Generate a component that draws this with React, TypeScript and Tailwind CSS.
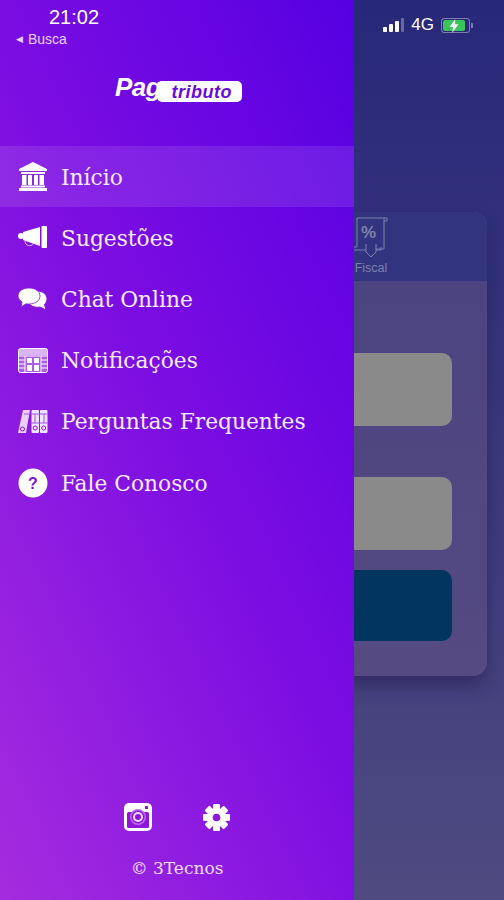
import React from "react";

const BankIcon = () => (
  <svg width="30" height="29" viewBox="0 0 30 29" fill="white">
    <path d="M15 0 29 7v2H1V7z" />
    <rect x="3" y="10" width="24" height="2" />
    <path d="M4 13h4.500v10H4zM10 13h4v10h-4zM16 13h4v10h-4zM21.500 13H26v10h-4.500z" />
    <rect x="3" y="23.500" width="24" height="2" />
    <rect x="1" y="26" width="28" height="3" />
  </svg>
);

const MegaphoneIcon = () => (
  <svg width="30" height="24" viewBox="0 0 30 24" fill="white">
    <circle cx="3" cy="10" r="3" />
    <path d="M5 6 22 1v19L5 14z" />
    <path d="M7 15c0 5 6 6 8 3" fill="none" stroke="white" strokeWidth="1" strokeOpacity="0.7" />
    <rect x="23.500" y="0" width="5.500" height="22" rx="1" />
  </svg>
);

const ChatIcon = () => (
  <svg width="30" height="22" viewBox="0 0 30 22" fill="none">
    <path d="M19 3c6 0 10 3.500 10 8 0 2-1 4-2.500 5.500L28 22l-6-3c-5 1-11-1-12-6z" fill="white" stroke="#8a12e0" strokeWidth="1" />
    <path d="M11 0c6 0 11 3 11 8s-5 8-11 8c-1 0-2 0-3-.2L3 19l1-5C2 12.500 0 10.500 0 8 0 3 5 0 11 0z" fill="white" stroke="#8a12e0" strokeWidth="0.8" />
  </svg>
);

const TableIcon = () => (
  <svg width="30" height="25" viewBox="0 0 30 25" fill="none">
    <rect x="0.500" y="0.500" width="29" height="24" rx="2" fill="white" fillOpacity="0.3" stroke="white" />
    <rect x="1" y="1" width="28" height="6" fill="white" fillOpacity="0.55" />
    <path d="M1 8h28M7 8v16M23 8v16M1 12h6M1 16h6M1 20h6M23 12h6M23 16h6M23 20h6" stroke="white" strokeWidth="1" />
    <rect x="9" y="10" width="5" height="5" fill="white" />
    <rect x="16" y="10" width="5" height="5" fill="white" />
    <rect x="9" y="17" width="5" height="6" fill="white" />
    <rect x="16" y="17" width="5" height="6" fill="white" />
  </svg>
);

const BindersIcon = () => (
  <svg width="30" height="25" viewBox="0 0 30 25" fill="none">
    <path d="M5 1h7L8 24H0z" fill="white" fillOpacity="0.8" />
    <rect x="13.500" y="1" width="7.500" height="23" rx="1" fill="white" fillOpacity="0.88" />
    <rect x="22" y="1" width="7.500" height="23" rx="1" fill="white" fillOpacity="0.88" />
    <path d="M13.500 5h16M13.500 14h16M6 5h5M17 5v9M26 5v9" stroke="#a050e8" strokeWidth="1" />
    <circle cx="4.500" cy="20" r="2" stroke="#8a12dc" strokeWidth="1" />
    <circle cx="17.200" cy="19" r="2" stroke="#8a12dc" strokeWidth="1" />
    <circle cx="25.700" cy="19" r="2" stroke="#8a12dc" strokeWidth="1" />
  </svg>
);

const HelpIcon = () => (
  <svg width="30" height="30" viewBox="0 0 30 30">
    <circle cx="15" cy="15" r="14.500" fill="white" />
    <text x="15" y="21" textAnchor="middle" fontSize="16" fontWeight="700" fill="#7d14c8" fontFamily="'Liberation Sans', sans-serif">?</text>
  </svg>
);

const CameraIcon = () => (
  <svg width="28" height="28" viewBox="0 0 28 28">
    <rect width="28" height="28" rx="5" fill="white" />
    <rect x="3" y="9" width="22" height="16" rx="1.500" fill="#8f16dc" />
    <circle cx="14" cy="14" r="8" fill="#b86fe8" />
    <circle cx="14" cy="14" r="6.500" fill="#8f16dc" />
    <circle cx="14" cy="14" r="5" fill="#f0dcfb" />
    <circle cx="14" cy="14" r="3" fill="#8f16dc" />
    <rect x="21" y="3" width="3" height="3" rx="0.500" fill="#8f16dc" />
  </svg>
);

const GearIcon = () => (
  <svg width="27" height="27" viewBox="0 0 27 27" fill="white">
    {[0, 45, 90, 135, 180, 225, 270, 315].map((deg) => (
      <rect key={deg} x="10" y="0" width="7" height="7" rx="1" transform={`rotate(${deg} 13.500 13.500)`} />
    ))}
    <circle cx="13.500" cy="13.500" r="9.500" />
    <circle cx="13.500" cy="13.500" r="3.800" fill="#8f16dc" />
  </svg>
);

const menu = [
  { label: "Início", icon: <BankIcon />, active: true },
  { label: "Sugestões", icon: <MegaphoneIcon /> },
  { label: "Chat Online", icon: <ChatIcon /> },
  { label: "Notificações", icon: <TableIcon /> },
  { label: "Perguntas Frequentes", icon: <BindersIcon /> },
  { label: "Fale Conosco", icon: <HelpIcon /> },
];

const Fiscal = () => (
  <div className="flex w-[36px] flex-col items-center">
    <svg width="36" height="41" viewBox="0 0 36 41" fill="none" stroke="#7b80ac" strokeWidth="1">
      <path d="M4 1h30v3h-3M4 1v29H0v3h13M31 1v31h-8" />
      <path d="M13 27v8l5 5 5-5v-8" />
      <path d="M23 33h5v-3" />
      <text x="8" y="21" fontSize="17" fontWeight="700" fill="#7f82a8" stroke="none" fontFamily="'Liberation Sans', sans-serif">%</text>
    </svg>
    <span className="mt-[3px] text-[12.500px] leading-[14px] text-[#7b80ac]">Fiscal</span>
  </div>
);

const App = () => {
  return (
    <div className="relative h-[900px] w-[504px] overflow-hidden bg-[linear-gradient(180deg,#28287a_0%,#34327c_30%,#4f4a80_100%)] font-['Liberation_Sans',sans-serif]">
      {/* Page behind the drawer */}
      <div className="flex h-[54px] items-start justify-end pr-[31px] pt-[15px]">
        <div className="flex items-center gap-[7px]">
          <div className="flex items-end gap-[2px]">
            <span className="h-[5px] w-[4px] rounded-[1px] bg-white" />
            <span className="h-[8px] w-[4px] rounded-[1px] bg-white" />
            <span className="h-[11px] w-[4px] rounded-[1px] bg-white" />
            <span className="h-[14px] w-[3px] rounded-[1px] bg-white/30" />
          </div>
          <span className="text-[17px] font-medium leading-[20px] text-white">4G</span>
          <div className="flex items-center">
            <div className="flex h-[15px] w-[29px] items-center rounded-[3px] border border-white/40 p-[1px]">
              <div className="relative flex h-full w-[22px] items-center justify-center rounded-[2px] bg-[#3ac55a]">
                <svg width="10" height="14" viewBox="0 0 9 12" className="absolute left-[6px] top-[-1px]">
                  <path d="M5.500 0 0.500 7h3L3 12l5.500-7.500h-3z" fill="white" />
                </svg>
              </div>
            </div>
            <span className="ml-[1px] h-[5px] w-[2px] rounded-r-[1px] bg-white/40" />
          </div>
        </div>
      </div>

      <div className="mx-[17px] mt-[158px] h-[464px] overflow-hidden rounded-[14px] bg-[linear-gradient(180deg,#4a4380_0%,#554a82_100%)] shadow-[0_10px_18px_rgba(30,20,70,0.45)]">
        <div className="flex h-[69px] items-start bg-[#33347f] pl-[336px] pt-[5px]">
          <Fiscal />
        </div>
        <div className="mx-[35px] flex flex-col">
          <div className="mt-[72px] h-[73px] rounded-[10px] bg-[#8a8a8a]" />
          <div className="mt-[51px] h-[73px] rounded-[10px] bg-[#8a8a8a]" />
          <div className="mt-[20px] h-[71px] rounded-[10px] bg-[#023660]" />
        </div>
      </div>

      {/* Drawer */}
      <aside className="absolute inset-y-0 left-0 flex w-[354px] flex-col bg-[linear-gradient(245deg,#5600e2_0%,#7a0ce2_46%,#a52cde_100%)] text-white">
        <div className="pl-[49px] pt-[6px] text-[20px] font-medium leading-[22px] text-white">21:02</div>
        <div className="flex items-center gap-[5px] pl-[16px] pt-[4px] text-[14px] leading-[15px] text-white/80">
          <span className="text-[9px]">◀</span>
          <span>Busca</span>
        </div>

        <div className="ml-[115px] mt-[27px] flex h-[30px] items-start">
          <span className="text-[26px] font-black italic leading-[26px] tracking-[-0.5px] text-white">Pag</span>
          <span className="-ml-[4px] mt-[7px] flex h-[21px] w-[85px] items-center justify-center rounded-[5px] bg-white pl-[4px] text-[18px] font-bold italic leading-[20px] tracking-[0.5px] text-[#6a0ae0]">
            tributo
          </span>
        </div>

        <nav className="mt-[42px] flex flex-col">
          {menu.map((item) => (
            <div
              key={item.label}
              className={`flex h-[61.200px] items-center pl-[18px] ${item.active ? "bg-white/10" : ""}`}
            >
              <span className="flex w-[30px] justify-center">{item.icon}</span>
              <span className="ml-[13px] pt-[2px] font-['DejaVu_Serif',serif] text-[21.750px] leading-[28px] text-[#f6eafd]">{item.label}</span>
            </div>
          ))}
        </nav>

        <div className="mt-auto flex flex-col items-center pb-[21px]">
          <div className="flex items-center gap-[51px]">
            <CameraIcon />
            <GearIcon />
          </div>
          <div className="mt-[26px] font-['DejaVu_Serif',serif] text-[17px] leading-[22px] text-white/85">© 3Tecnos</div>
        </div>
      </aside>
    </div>
  );
};

export default App;
